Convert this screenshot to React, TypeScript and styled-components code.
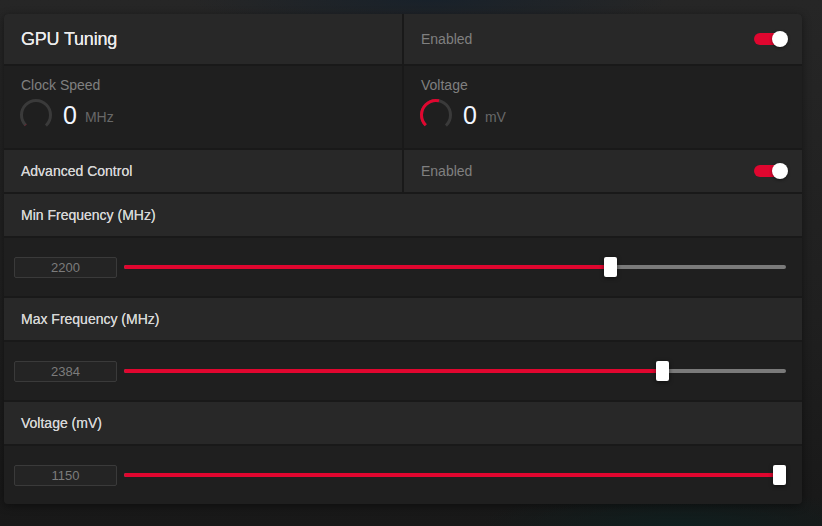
import { styled, createGlobalStyle } from 'styled-components';

const GlobalStyle = createGlobalStyle`
  html,
  body {
    margin: 0;
    padding: 0;
  }

  body {
    width: 822px;
    height: 526px;
    overflow: hidden;
    font-family: 'Liberation Sans', Arial, sans-serif;
    background:
      radial-gradient(ellipse 240px 30px at 430px 0, #18212a 0%, rgba(24, 33, 42, 0) 100%),
      radial-gradient(ellipse 200px 40px at 680px 526px, #0f1e1e 0%, rgba(15, 30, 30, 0) 100%),
      linear-gradient(180deg, #262626 0%, #1f1f1f 60%, #181818 100%);
  }
`;

const RED = '#e0062f';
const THUMB_W = 13;

const sliders = [
  { label: 'Min Frequency (MHz)', value: 2200, percent: 74 },
  { label: 'Max Frequency (MHz)', value: 2384, percent: 82 },
  { label: 'Voltage (mV)', value: 1150, percent: 100 },
];

const Gauge = ({ fill }: { fill: number }) => {
  const r = 14.5;
  const circ = 2 * Math.PI * r;
  const arc = circ * 0.75;
  const red = arc * fill;

  return (
    <svg width="34" height="34" viewBox="0 0 34 34">
      <g transform="rotate(135 17 17)">
        <circle
          cx="17"
          cy="17"
          r={r}
          fill="none"
          stroke="#3a3a3a"
          strokeWidth="3"
          strokeDasharray={`${arc} ${circ}`}
        />
        <circle
          cx="17"
          cy="17"
          r={r}
          fill="none"
          stroke={RED}
          strokeWidth="3"
          strokeDasharray={`${Math.max(red, 0.6)} ${circ}`}
          opacity={fill > 0 ? 1 : 0.35}
        />
      </g>
    </svg>
  );
};

const Toggle = () => (
  <Switch>
    <Knob />
  </Switch>
);

const App = () => {
  return (
    <>
      <GlobalStyle />
      <Page>
        <Panel>
          <Split>
            <Cell $tone="head" $height={50}>
              <Title>GPU Tuning</Title>
            </Cell>
            <Cell $tone="head" $height={50}>
              <Muted>Enabled</Muted>
              <Toggle />
            </Cell>
          </Split>

          <Split>
            <StatCell>
              <Muted>Clock Speed</Muted>
              <Reading>
                <Gauge fill={0} />
                <Big>0</Big>
                <Unit>MHz</Unit>
              </Reading>
            </StatCell>
            <StatCell>
              <Muted>Voltage</Muted>
              <Reading>
                <Gauge fill={0.54} />
                <Big>0</Big>
                <Unit>mV</Unit>
              </Reading>
            </StatCell>
          </Split>

          <Split>
            <Cell $tone="head" $height={42}>
              <Label>Advanced Control</Label>
            </Cell>
            <Cell $tone="head" $height={42}>
              <Muted>Enabled</Muted>
              <Toggle />
            </Cell>
          </Split>

          {sliders.map((s) => {
            const pos = `calc(${s.percent}% - ${(s.percent / 100) * THUMB_W}px)`;
            return (
              <Group key={s.label}>
                <Cell $tone="head" $height={42}>
                  <Label>{s.label}</Label>
                </Cell>
                <SliderRow>
                  <ValueBox>{s.value}</ValueBox>
                  <Track>
                    <Fill style={{ width: `calc(${pos} + ${THUMB_W / 2}px)` }} />
                    <Thumb style={{ left: pos }} />
                  </Track>
                </SliderRow>
              </Group>
            );
          })}
        </Panel>
      </Page>
    </>
  );
};

export default App;

const Page = styled.div`
  padding: 14px 20px 22px 4px;
`;

const Panel = styled.div`
  display: flex;
  flex-direction: column;
  gap: 2px;

  width: 798px;
  height: 490px;
  overflow: hidden;

  background: #191919;
  border-radius: 4px;
  box-shadow: 0 2px 8px rgba(0, 0, 0, 0.45);
`;

const Split = styled.div`
  display: grid;
  grid-template-columns: 398px 398px;
  gap: 2px;
`;

const Group = styled.div`
  display: flex;
  flex-direction: column;
  gap: 2px;
`;

const Cell = styled.div<{ $tone: 'head' | 'body'; $height: number }>`
  display: flex;
  align-items: center;
  justify-content: space-between;

  height: ${({ $height }) => $height}px;
  padding: 0 15px 0 17px;
  box-sizing: border-box;

  background: ${({ $tone }) => ($tone === 'head' ? '#282828' : '#1f1f1f')};
`;

const StatCell = styled.div`
  display: flex;
  flex-direction: column;
  gap: 5px;

  height: 82px;
  padding: 11px 17px 0 15px;
  box-sizing: border-box;

  background: #1f1f1f;

  & > span:first-child {
    padding-left: 2px;
  }
`;

const Title = styled.span`
  font-size: 18px;
  color: #ececec;
  letter-spacing: -0.2px;
  text-shadow: 0 0 0.4px #ececec;
`;

const Label = styled.span`
  font-size: 14px;
  color: #d6d6d6;
  text-shadow: 0 0 0.3px #d6d6d6;
`;

const Muted = styled.span`
  font-size: 14px;
  color: #808080;
`;

const Reading = styled.div`
  display: flex;
  align-items: center;
  gap: 10px;
`;

const Big = styled.span`
  font-size: 25px;
  color: #f2f6ff;
`;

const Unit = styled.span`
  margin-left: -2px;
  padding-top: 4px;

  font-size: 14px;
  color: #686868;
`;

const Switch = styled.div`
  position: relative;

  width: 28px;
  height: 12px;
  margin-right: 5px;

  background: ${RED};
  border-radius: 6px;
`;

const Knob = styled.div`
  position: absolute;
  top: -2px;
  right: -6px;

  width: 16px;
  height: 16px;

  background: #ffffff;
  border-radius: 50%;
  box-shadow: 0 1px 3px rgba(0, 0, 0, 0.5);
`;

const SliderRow = styled.div`
  display: flex;
  align-items: center;
  gap: 7px;

  height: 58px;
  padding: 0 16px 0 10px;
  box-sizing: border-box;

  background: #1f1f1f;
`;

const ValueBox = styled.div`
  flex: 0 0 auto;

  width: 103px;
  height: 21px;
  box-sizing: border-box;

  font-size: 13px;
  line-height: 19px;
  color: #7c7c7c;
  text-align: center;

  background: #242424;
  border: 1px solid #3a3a3a;
  border-radius: 2px;
`;

const Track = styled.div`
  position: relative;
  flex: 1;

  height: 4px;

  background: #7a7a7a;
  border-radius: 2px;
`;

const Fill = styled.div`
  height: 100%;

  background: ${RED};
  border-radius: 2px;
`;

const Thumb = styled.div`
  position: absolute;
  top: 50%;

  width: ${THUMB_W}px;
  height: 20px;
  transform: translateY(-50%);

  background: #ffffff;
  border-radius: 2px;
  box-shadow: 0 1px 4px rgba(0, 0, 0, 0.6);
`;
